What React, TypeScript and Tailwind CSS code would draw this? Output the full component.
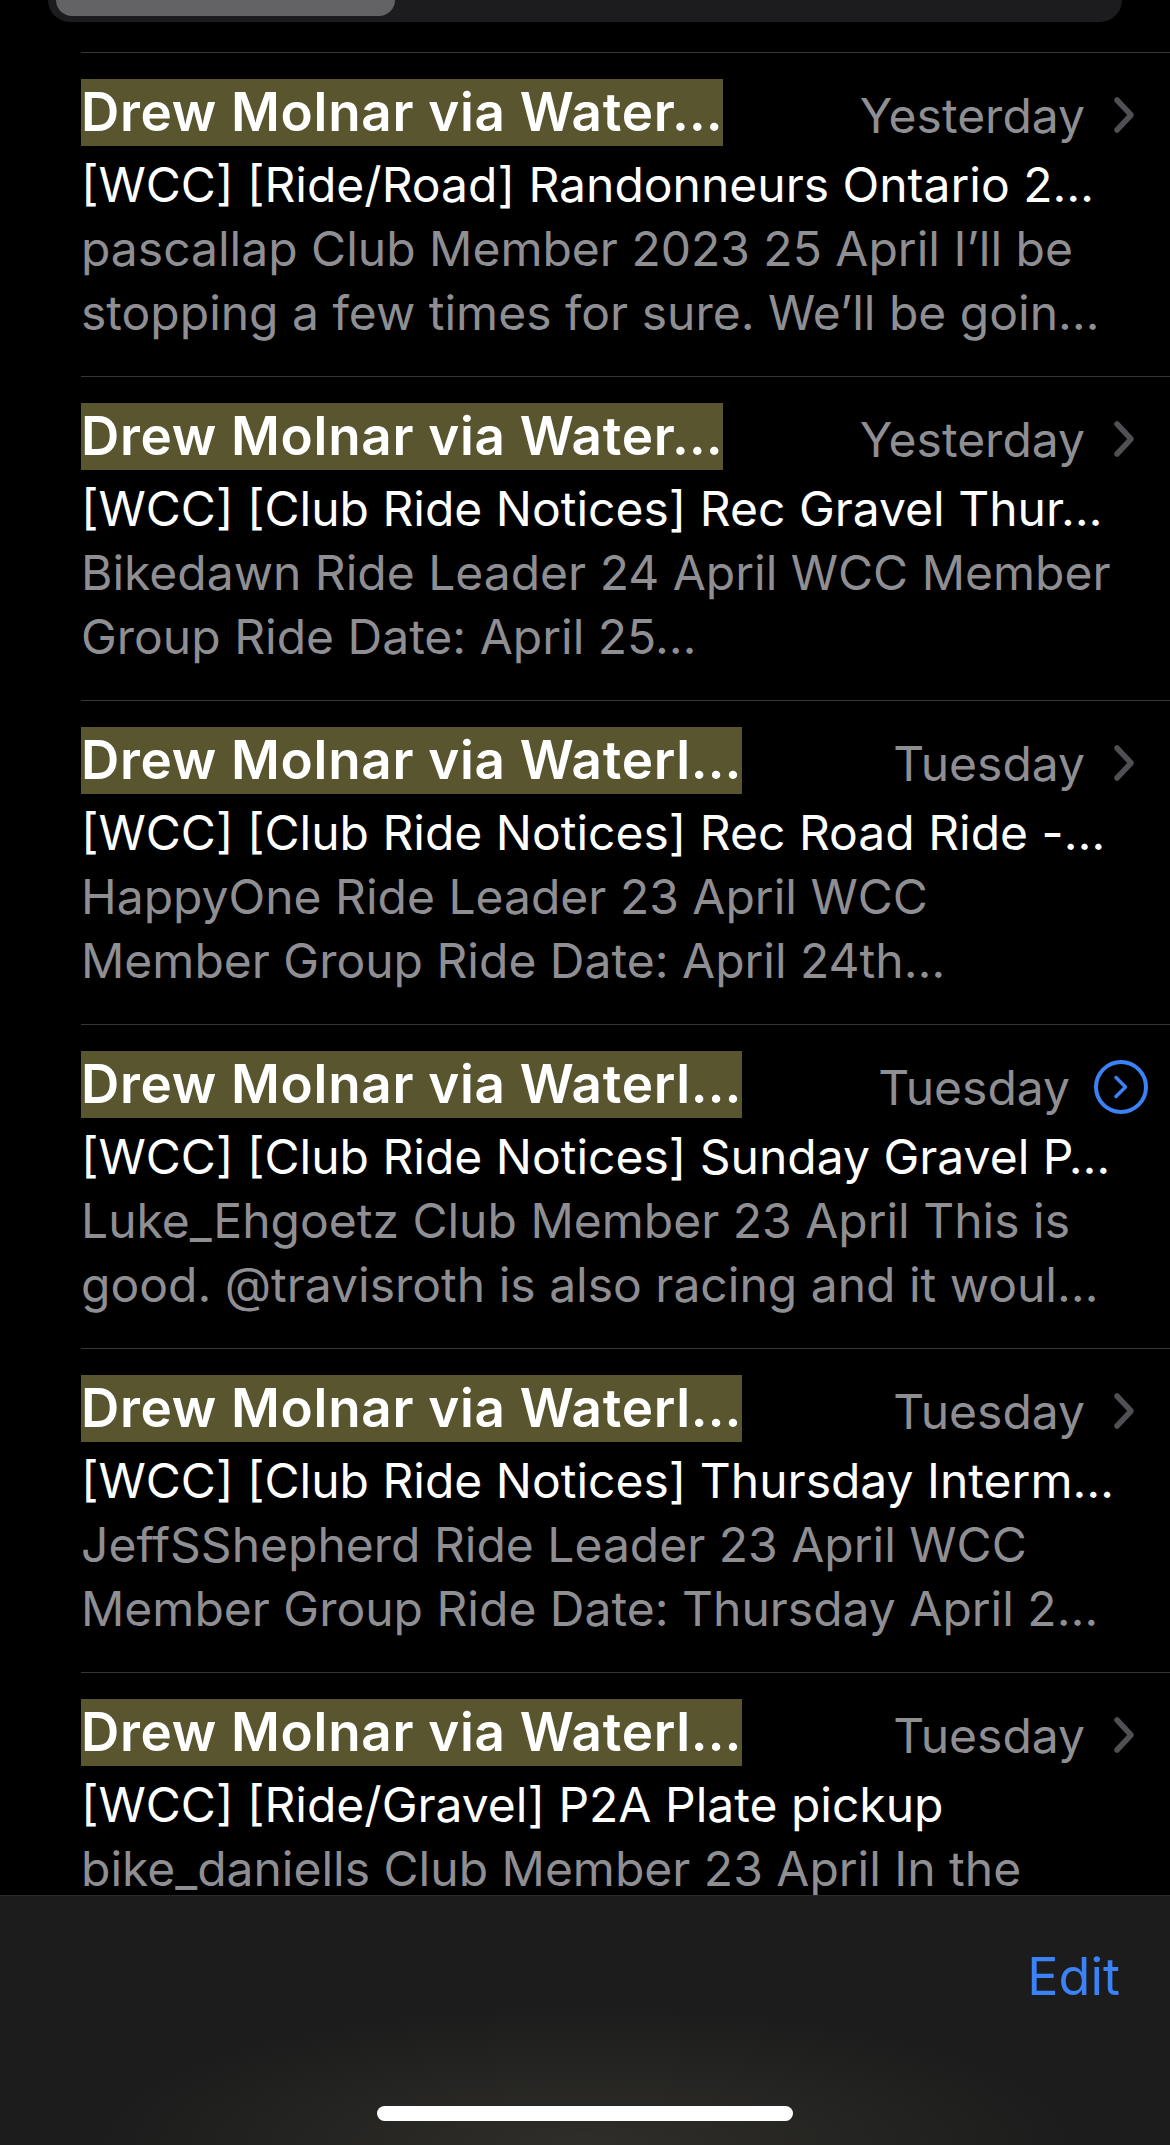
import React from "react";

type Email = {
  sender: string;
  date: string;
  subject: string;
  preview: string[];
  unreadDetail?: boolean;
};

const emails: Email[] = [
  {
    sender: "Drew Molnar via Water…",
    date: "Yesterday",
    subject: "[WCC] [Ride/Road] Randonneurs Ontario 2…",
    preview: ["pascallap Club Member 2023 25 April I’ll be", "stopping a few times for sure. We’ll be goin…"],
  },
  {
    sender: "Drew Molnar via Water…",
    date: "Yesterday",
    subject: "[WCC] [Club Ride Notices] Rec Gravel Thur…",
    preview: ["Bikedawn Ride Leader 24 April WCC Member", "Group Ride Date: April 25…"],
  },
  {
    sender: "Drew Molnar via Waterl…",
    date: "Tuesday",
    subject: "[WCC] [Club Ride Notices] Rec Road Ride -…",
    preview: ["HappyOne Ride Leader 23 April WCC", "Member Group Ride Date: April 24th…"],
  },
  {
    sender: "Drew Molnar via Waterl…",
    date: "Tuesday",
    subject: "[WCC] [Club Ride Notices] Sunday Gravel P…",
    preview: ["Luke_Ehgoetz Club Member 23 April This is", "good. @travisroth is also racing and it woul…"],
    unreadDetail: true,
  },
  {
    sender: "Drew Molnar via Waterl…",
    date: "Tuesday",
    subject: "[WCC] [Club Ride Notices] Thursday Interm…",
    preview: ["JeffSShepherd Ride Leader 23 April WCC", "Member Group Ride Date: Thursday April 2…"],
  },
  {
    sender: "Drew Molnar via Waterl…",
    date: "Tuesday",
    subject: "[WCC] [Ride/Gravel] P2A Plate pickup",
    preview: ["bike_daniells Club Member 23 April In the"],
  },
];

function Chevron() {
  return (
    <svg width="24" height="40" viewBox="0 0 24 40" className="ml-[27px] mr-[34px] mt-[4px]">
      <polyline points="5,5 19,20 5,35" fill="none" stroke="#4f4f54" strokeWidth="5.5" strokeLinecap="round" strokeLinejoin="round" />
    </svg>
  );
}

function DetailButton() {
  return (
    <svg width="56" height="56" viewBox="0 0 56 56" className="ml-[23px] mr-[21px] mt-[4px]">
      <circle cx="28" cy="28" r="25" fill="none" stroke="#3a82f5" strokeWidth="4" />
      <polyline points="23,18.5 32.5,28 23,37.5" fill="none" stroke="#3a82f5" strokeWidth="3.5" strokeLinecap="round" strokeLinejoin="round" />
    </svg>
  );
}

function Row({ email }: { email: Email }) {
  return (
    <div className="border-t border-[#353538] pt-[26px] pb-[31px]">
      <div className="flex items-center justify-between h-[67px]">
        <span className="bg-[#58552f] text-white font-semibold text-[53px] leading-[67px] h-[67px] whitespace-nowrap tracking-[0.7px]">
          {email.sender}
        </span>
        <div className="flex items-center">
          <span className="text-[#8e8e93] text-[48px] leading-[67px] pt-[6px]">{email.date}</span>
          {email.unreadDetail ? <DetailButton /> : <Chevron />}
        </div>
      </div>
      <div className="mt-[7px] text-white text-[48px] leading-[64px] whitespace-nowrap overflow-hidden">{email.subject}</div>
      {email.preview.map((line) => (
        <div key={line} className="text-[#8e8e93] text-[48px] leading-[64px] whitespace-nowrap overflow-hidden">
          {line}
        </div>
      ))}
    </div>
  );
}

export default function App() {
  return (
    <div className="w-[1170px] h-[2145px] bg-black flex flex-col overflow-hidden" style={{ fontFamily: "Inter, 'Noto Sans', sans-serif" }}>
      {/* segmented control peeking from above */}
      <div className="mx-[48px] h-[22px] bg-[#1c1c1e] rounded-b-[24px] pl-[8px] shrink-0">
        <div className="w-[339px] h-[16px] bg-[#636366] rounded-b-[16px]" />
      </div>

      {/* mail list */}
      <div className="flex-1 overflow-hidden pl-[81px] pt-[30px]">
        {emails.map((e, i) => (
          <Row key={i} email={e} />
        ))}
      </div>

      {/* bottom toolbar */}
      <div className="h-[250px] shrink-0 border-t border-[#2a2a2c] bg-[radial-gradient(ellipse_60%_80%_at_50%_100%,#2f2e29_0%,#1c1c1c_70%)] flex flex-col pt-[51px] pb-[24px]">
        <div className="flex justify-end pr-[50px]">
          <span className="text-[#3a82f5] text-[52px] leading-[60px]">Edit</span>
        </div>
        <div className="mt-auto mx-auto w-[416px] h-[15px] rounded-full bg-white" />
      </div>
    </div>
  );
}
